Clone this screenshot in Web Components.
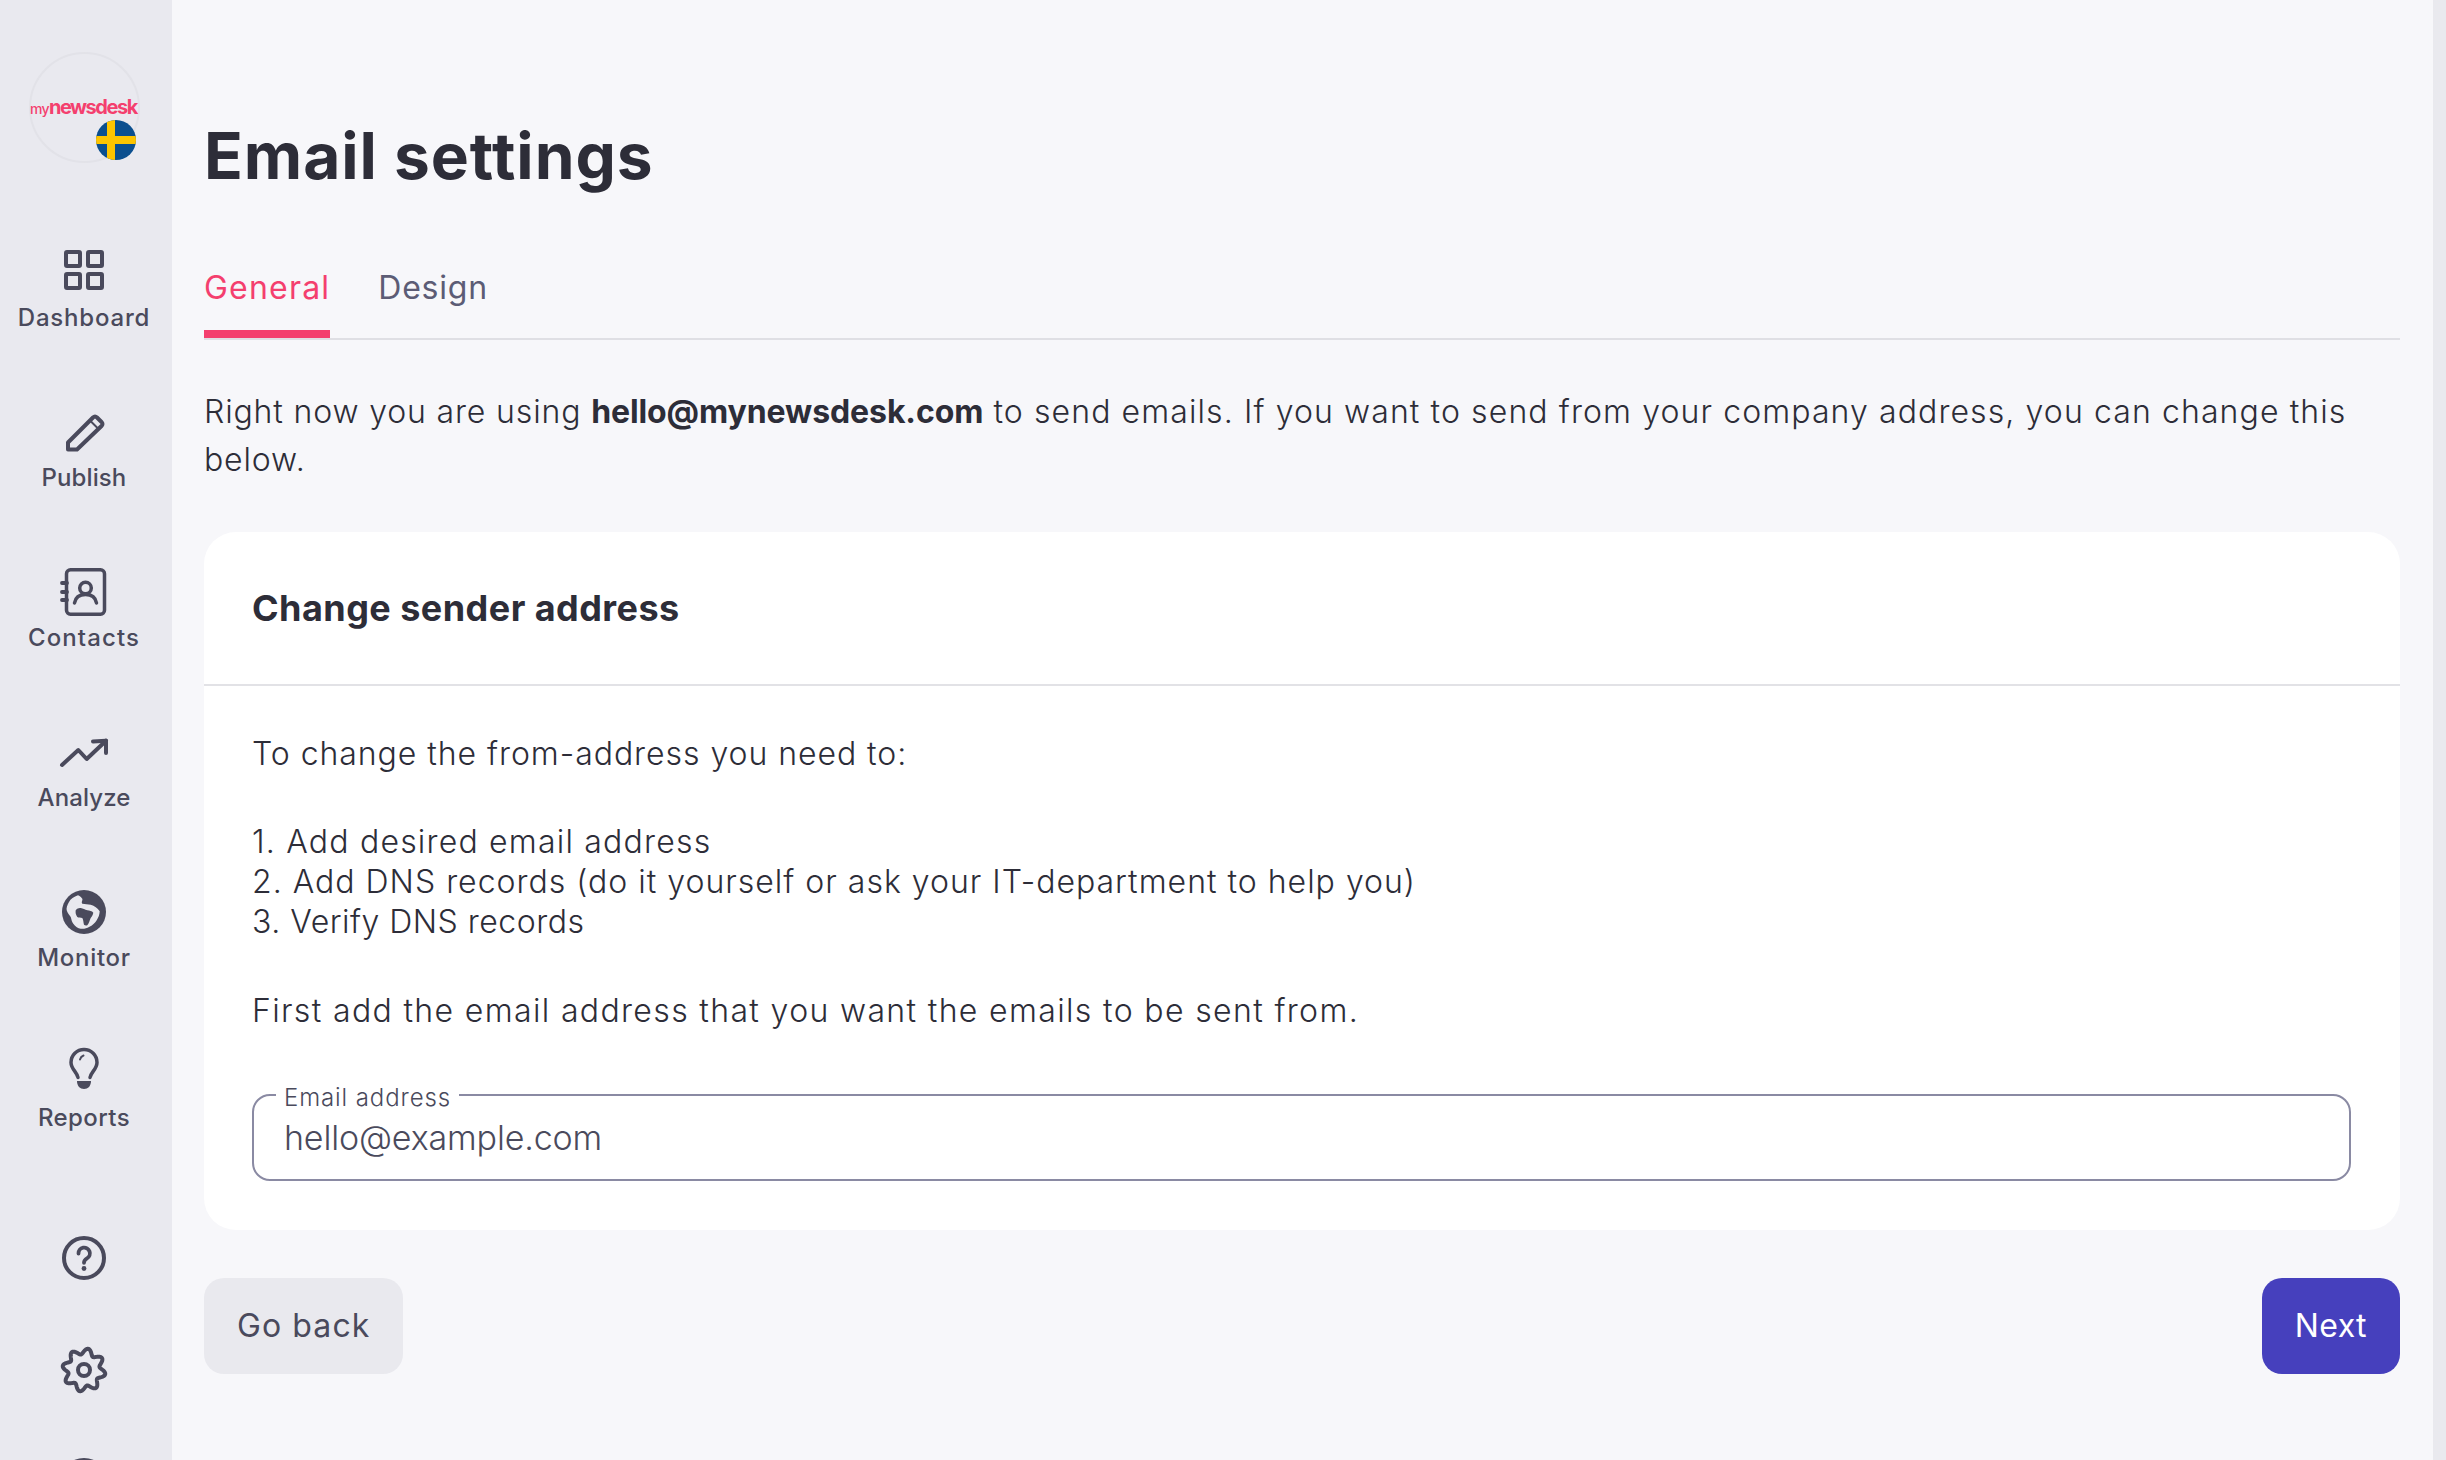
<!doctype html>
<html><head><meta charset="utf-8"><style>
html,body{margin:0;height:100%;overflow:hidden;background:#f7f7fa}
body{font-family:Inter,"Noto Sans",sans-serif;color:#2d2d38}
</style></head><body>
<md-app>
  <md-sidebar slot="side">
    <md-logo></md-logo>
    <nav-item label="Dashboard" ls=".8"><svg viewBox="0 0 48 48" fill="none" stroke="currentColor" stroke-width="4" stroke-linejoin="round"><rect x="6" y="6" width="14" height="14" rx="1"/><rect x="28" y="6" width="14" height="14" rx="1"/><rect x="6" y="28" width="14" height="14" rx="1"/><rect x="28" y="28" width="14" height="14" rx="1"/></svg></nav-item>
    <nav-item label="Publish" ls=".1"><svg viewBox="0 -2 48 48" fill="none" stroke="currentColor" stroke-width="4" stroke-linejoin="round" stroke-linecap="round"><path d="M8 41.500V34.500L33 9.500Q35 7.500 37 9.500L41.500 14Q43.500 16 41.500 18L17 41.500Z"/><path d="M30.500 13L38 20.500" stroke-width="2"/></svg></nav-item>
    <nav-item label="Contacts" ls="1.1"><svg viewBox="0 -2 48 48" fill="none" stroke="currentColor" stroke-width="3.500" stroke-linecap="round"><rect x="6.500" y="1.800" width="38" height="44.400" rx="4"/><path d="M2 15H7M2 24H7M2 32H7" stroke-width="3.800"/><circle cx="25.500" cy="20" r="5.800"/><path d="M14.500 35C15.500 29 20 26.500 25.500 26.500S35.500 29 36.500 35"/></svg></nav-item>
    <nav-item label="Analyze" ls=".1"><svg viewBox="0 -2 48 48" fill="none" stroke="currentColor" stroke-width="4" stroke-linecap="round" stroke-linejoin="round"><path d="M2 37L18.300 22L26.700 31L46 12.700"/><path d="M33 13.500L46 12.700L46 25"/></svg></nav-item>
    <nav-item label="Monitor" ls=".7"><svg viewBox="0 -2 48 48"><circle cx="24" cy="24" r="22" fill="currentColor"/><path fill="#e9e9ef" d="M18 7.300C14 8.500 10.500 11 9 14C7.200 17 6.200 20 6.700 22.300C7.500 25.500 9.500 27 10.700 29C11.500 31.500 11.800 34 13.300 35.700C15.500 38.500 18 40.300 20.700 40.700C24 41 27 40.300 29 39C32.500 37.500 35 35 36.700 32.300C38.500 29.500 39.600 26.500 39.700 23.300C37.500 20 34.500 17.800 30.700 16.700C28 16 25 16.300 22.300 15.700C21 14 23 12 22.300 10.700C21 9 19.500 8 18 7.300Z"/><path fill="currentColor" d="M15.700 22.300C17 20.500 19 19.700 20.700 20C23 20.500 25 21.700 27.300 22.300C29.500 22.700 32 23 33.300 24.700C33 27 31.700 28.500 30.700 30C29.500 32.500 29 35.500 27.300 37.300C26 37.800 24.800 37.500 24 36.700C23.300 34.500 23.500 32 22.300 30C20.500 29.500 18.800 30 17.300 29C15.800 27 15.300 24.500 15.700 22.300Z"/></svg></nav-item>
    <nav-item label="Reports" ls=".4"><svg viewBox="0 1 48 48" fill="none" stroke="currentColor" stroke-width="3.500" stroke-linecap="round"><path d="M18 32.500C17 27 11 24 11 17.500A13 13 0 0 1 37 17.500C37 24 31 27 30 32.500"/><path d="M20 14.500C20.500 12.500 22 11 23.500 10.500" stroke-width="2"/><path d="M17 36H31C31 41 28 44 24 44C20 44 17 41 17 36Z" fill="currentColor" stroke="none"/></svg></nav-item>
    <side-icon class="first"><svg viewBox="0 0 48 48" fill="none" stroke="currentColor" stroke-width="4" stroke-linecap="round"><circle cx="24" cy="24" r="20"/><path d="M18.500 19.500A5.700 5.700 0 1 1 27 24.300C25 25.500 24 26.500 24 28.800" stroke-width="3.800"/><circle cx="24" cy="34.500" r="2.400" fill="currentColor" stroke="none"/></svg></side-icon>
    <side-icon><svg viewBox="0 0 48 48" fill="none" stroke="currentColor" stroke-width="4" stroke-linejoin="round"><path id="gear"/><circle cx="24" cy="24" r="6"/></svg></side-icon>
    <side-icon class="avatar"></side-icon>
  </md-sidebar>
  <md-main>
    <page-title>Email settings</page-title>
    <md-tabs>
      <tab-link active style="letter-spacing:1.2px">General</tab-link>
      <tab-link style="letter-spacing:.8px">Design</tab-link>
    </md-tabs>
    <intro-text><span class="a">Right now you are using </span><b>hello@mynewsdesk.com</b><span class="c"> to send emails. If you want to send from your company address, you can change this</span><br><span class="a">below.</span></intro-text>
    <md-card>
      <span slot="title">Change sender address</span>
      <text-line style="letter-spacing:.95px">To change the from-address you need to:</text-line>
      <text-line class="gap first" style="letter-spacing:1.2px">1. Add desired email address</text-line>
      <text-line style="letter-spacing:1px">2. Add DNS records (do it yourself or ask your IT-department to help you)</text-line>
      <text-line style="letter-spacing:.5px">3. Verify DNS records</text-line>
      <text-line class="gap" style="letter-spacing:1.35px">First add the email address that you want the emails to be sent from.</text-line>
      <text-field label="Email address">hello@example.com</text-field>
    </md-card>
    <md-actions>
      <md-button style="letter-spacing:1.1px">Go back</md-button>
      <md-button primary style="letter-spacing:.4px">Next</md-button>
    </md-actions>
  </md-main>
  <md-scrollbar slot="bar"></md-scrollbar>
</md-app>
<script>
function def(name,html,setup){
  customElements.define(name,class extends HTMLElement{
    constructor(){super();this.attachShadow({mode:'open'}).innerHTML=typeof html==='function'?html(this):html;}
    connectedCallback(){
      if(typeof html==='function')this.shadowRoot.innerHTML=html(this);
      if(setup)setup(this);
    }
  });
}
def('md-app',`<style>:host{display:flex;height:1460px;width:2446px;overflow:hidden}</style><slot name="side"></slot><slot></slot><slot name="bar"></slot>`);
def('md-sidebar',`<style>:host{display:block;flex:0 0 172px;height:1460px;overflow:hidden;background:#e9e9ef;padding:52px 4px 0 0;box-sizing:border-box;color:#4a4a5c}</style><slot></slot>`);
def('md-logo',`<style>
:host{display:block;position:relative;width:111px;height:111px;margin:0 0 83px 29px;box-sizing:border-box;border:2px solid #e2e2e8;border-radius:50%}
.t{position:absolute;left:-1px;top:38px;white-space:nowrap;font:700 20px/30px Inter,sans-serif;color:#f43f6e;letter-spacing:-1.45px}
.t small{font-size:14px;font-weight:500;letter-spacing:-.7px}
svg{position:absolute;left:65px;top:66px;width:40px;height:40px}
</style><div class="t"><small>my</small>newsdesk</div>
<svg viewBox="0 0 40 40"><defs><clipPath id="c"><circle cx="20" cy="20" r="20"/></clipPath></defs><g clip-path="url(#c)"><rect width="40" height="40" fill="#0b4f8f"/><rect x="11" width="8" height="40" fill="#fdc400"/><rect y="16" width="40" height="8" fill="#fdc400"/></g></svg>`);
def('nav-item',el=>`<style>
:host{display:block;height:160px;text-align:center;color:#4a4a5c}
::slotted(svg){display:block;width:48px;height:48px;margin:0 auto;overflow:visible}
.l{margin-top:9px;font:550 24px/30px Inter,sans-serif;letter-spacing:${el.getAttribute('ls')}px;white-space:nowrap}
</style><slot></slot><div class="l">${el.getAttribute('label')}</div>`);
def('side-icon',`<style>
:host{display:block;height:48px;margin-bottom:64px}
:host(.first){margin-top:28px}
:host(.avatar){width:48px;height:48px;margin-left:60px;border-radius:50%;background:#4a4a5c}
::slotted(svg){display:block;width:48px;height:48px;margin:0 auto}
</style><slot></slot>`);
def('md-main',`<style>:host{display:block;flex:1;min-width:0;padding:0 0 0 32px;margin-right:33px;box-sizing:border-box}</style><slot></slot>`);
def('md-scrollbar',`<style>:host{display:block;flex:0 0 13px;background:#e9e9ee}</style>`);
def('page-title',`<style>:host{display:block;padding-top:118px;font:700 64px/76px Inter,sans-serif;color:#2d2d38;letter-spacing:.95px}</style><slot></slot>`);
def('md-tabs',`<style>:host{display:flex;gap:48px;margin-top:32px;border-bottom:2px solid #dfdfe4;align-items:flex-end;height:112px}</style><slot></slot>`);
def('tab-link',`<style>
:host{display:block;height:89px;box-sizing:border-box;padding-top:19px;font:400 32px/40px Inter,sans-serif;color:#5c5c75;border-bottom:8px solid transparent}
:host([active]){color:#f43f6e;border-bottom-color:#f43f6e}
</style><slot></slot>`);
def('intro-text',`<style>:host{display:block;margin:48px 0;font:300 32px/48px Inter,sans-serif;color:#2d2d38}::slotted(b){font-weight:700;letter-spacing:-.1px}::slotted(.a){letter-spacing:.85px}::slotted(.c){letter-spacing:1.1px}</style><slot></slot>`);
def('md-card',`<style>
:host{display:block;background:#fff;border-radius:32px}
header{box-sizing:border-box;padding:0 48px 1px;display:flex;align-items:center;font:700 36px/44px Inter,sans-serif;letter-spacing:.45px;color:#2d2d38;border-bottom:2px solid #e2e2e6;height:154px}
.b{padding:48px 49px 49px}
</style><header><slot name="title"></slot></header><div class="b"><slot></slot></div>`);
def('text-line',`<style>:host{display:block;margin-left:-1px;font:300 32px/40px Inter,sans-serif;color:#2d2d38}:host(.gap){margin-top:49px}:host(.first){margin-top:48px}</style><slot></slot>`);
def('text-field',el=>`<style>
:host{display:block;margin-top:47px;margin-left:-1px}
fieldset{margin:0;padding:0 24px 0 22px;border:2px solid #8a8aa3;border-radius:18px;height:103px;box-sizing:border-box;min-width:0}
legend{padding:6px 8px 0;margin-left:0;font:300 24px/28px Inter,sans-serif;letter-spacing:.9px;color:#4a4a5c}
.v{font:300 34px/42px Inter,sans-serif;letter-spacing:-.15px;color:#4a4a5c;padding:0 8px;margin-top:5px}
</style><fieldset><legend>${el.getAttribute('label')}</legend><div class="v"><slot></slot></div></fieldset>`);
def('md-actions',`<style>:host{display:flex;justify-content:space-between;margin-top:48px}</style><slot></slot>`);
def('md-button',`<style>
:host{display:flex;align-items:center;height:96px;padding:0 33px;box-sizing:border-box;border-radius:20px;background:#e9e9ee;color:#4a4a5c;font:400 32px/40px Inter,sans-serif}
:host([primary]){background:#4640bd;color:#fff}
</style><slot></slot>`);
const p=[];for(let i=0;i<=240;i++){const t=i/240*Math.PI*2,r=18.7+2.900*Math.cos(8*t-Math.PI/2);p.push((24+r*Math.cos(t)).toFixed(2)+' '+(24+r*Math.sin(t)).toFixed(2));}
document.getElementById('gear').setAttribute('d','M'+p.join('L')+'Z');
</script>
</body></html>
